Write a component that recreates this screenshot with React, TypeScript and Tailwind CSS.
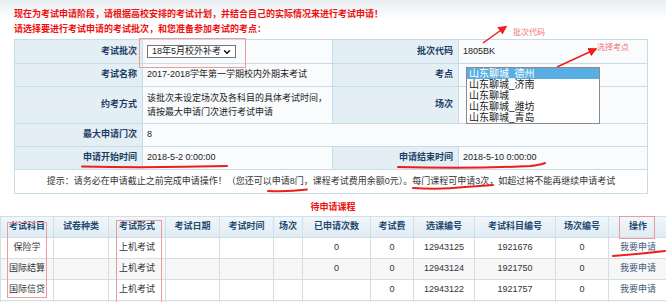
import { Fragment } from "react";
import { ChevronDown } from "lucide-react";

const font = "font-['Liberation_Sans','Noto_Sans_CJK_SC',sans-serif]";

const sites = ["山东聊城_德州", "山东聊城_济南", "山东聊城", "山东聊城_潍坊", "山东聊城_青岛"];

const headers = [
  "考试科目",
  "试卷种类",
  "考试形式",
  "考试日期",
  "考试时间",
  "场次",
  "已申请次数",
  "考试费",
  "选课编号",
  "考试科目编号",
  "场次编号",
  "操作",
];

const courses = [
  ["保险学", "", "上机考试", "", "", "", "0", "0", "12943125", "1921676", "0"],
  ["国际结算", "", "上机考试", "", "", "", "0", "0", "12943124", "1921750", "0"],
  ["国际信贷", "", "上机考试", "", "", "", "", "0", "12943122", "1921757", "0"],
  ["", "", "", "", "", "", "", "", "", "", ""],
];

function Label({ children }: { children: React.ReactNode }) {
  return (
    <div className="flex items-center justify-end bg-[#e4eef5] pr-[5px] font-bold text-[#1c3d63]">
      {children}
    </div>
  );
}

function Value({ children, className = "" }: { children?: React.ReactNode; className?: string }) {
  return (
    <div className={`flex items-center bg-[#f9fbfc] pl-[4px] text-[#222] ${className}`}>
      {children}
    </div>
  );
}

function Annotations() {
  return (
    <>
      <svg
        className="pointer-events-none absolute left-0 top-0"
        width={666}
        height={302}
        viewBox="0 0 666 302"
      >
        <defs>
          <marker id="head" markerWidth="6" markerHeight="6" refX="5" refY="3" orient="auto">
            <path d="M0 0 L6 3 L0 6 z" fill="#f01d1d" />
          </marker>
        </defs>
        {/* boxes */}
        <g fill="none" stroke="#ef9a9a" strokeWidth="1">
          <rect x="139.5" y="38.5" width="106" height="29" />
          <rect x="7.5" y="222.5" width="39" height="75" />
          <rect x="116.5" y="220.5" width="45" height="90" />
          <rect x="619.5" y="216.5" width="35" height="22" />
        </g>
        {/* underlines */}
        <g fill="none" stroke="#f01d1d" strokeWidth="2" strokeLinecap="round">
          <path d="M82 166.5 Q150 168 227 166" />
          <path d="M398 167 Q470 169 530 166 Q540 165 545 163" />
          <path d="M268 191 Q288 192 307 189.5" />
          <path d="M413 188 Q440 190 465 187 Q480 186 493 185" />
          <path d="M613 256 Q640 254 665 251" />
        </g>
        {/* arrows */}
        <g stroke="#f01d1d" strokeWidth="1.5" fill="none">
          <line x1="483" y1="43" x2="506" y2="26.5" markerEnd="url(#head)" />
          <line x1="557" y1="67" x2="596" y2="49" markerEnd="url(#head)" />
        </g>
      </svg>
      <span className="absolute left-[513px] top-[27px] text-[8px] leading-[12px] text-[#f07878]">
        批次代码
      </span>
      <span className="absolute left-[597px] top-[42px] text-[8px] leading-[12px] text-[#f07878]">
        选择考点
      </span>
    </>
  );
}

export default function App() {
  return (
    <div
      className={`relative h-[302px] w-[666px] overflow-hidden bg-[linear-gradient(to_bottom,#e8eef1_0px,#ffffff_20px)] text-[9px] ${font}`}
    >
      {/* notice */}
      <div className="pl-[14px] pt-[7px] text-[9px] font-bold leading-[15px] text-[#f01010]">
        <div>现在为考试申请阶段，请根据高校安排的考试计划，并结合自己的实际情况来进行考试申请！</div>
        <div>请选择要进行考试申请的考试批次，和您准备参加考试的考点：</div>
      </div>

      {/* batch form */}
      <div className="ml-[14px] mt-[2px] grid w-[634px] grid-cols-[127px_189px_125px_188px] grid-rows-[23px_22px_36px_22px_22px_23px] gap-px bg-[#c8dce8] p-px">
        <Label>考试批次</Label>
        <Value>
          <div className="flex h-[13px] w-[89px] items-center justify-between whitespace-nowrap border border-[#767676] bg-white pl-[4px] pr-[3px] text-[9px] leading-[11px] text-[#222]">
            <span>18年5月校外补考</span>
            <ChevronDown size={10} strokeWidth={3.5} className="shrink-0 text-[#111]" />
          </div>
        </Value>
        <Label>批次代码</Label>
        <Value>1805BK</Value>

        <Label>考试名称</Label>
        <Value>2017-2018学年第一学期校内外期末考试</Value>
        <Label>考点</Label>
        <Value className="relative">
          <div className="absolute left-[7px] top-[3px] z-10 w-[134px] border border-[#8a8a8a] bg-white text-[10px] leading-[11px] text-[#222]">
            {sites.map((s, i) => (
              <div key={s} className={`pl-[2px] ${i === 0 ? "bg-[#58aee2] text-white" : ""}`}>
                {s}
              </div>
            ))}
          </div>
        </Value>

        <Label>约考方式</Label>
        <Value className="leading-[14px]">
          <div>
            <div>该批次未设定场次及各科目的具体考试时间，</div>
            <div>请按最大申请门次进行考试申请</div>
          </div>
        </Value>
        <Label>场次</Label>
        <Value />

        <Label>最大申请门次</Label>
        <Value className="col-span-3">8</Value>

        <Label>申请开始时间</Label>
        <Value>2018-5-2 0:00:00</Value>
        <Label>申请结束时间</Label>
        <Value>2018-5-10 0:00:00</Value>

        <div className="col-span-4 flex items-center justify-center bg-white text-[#333]">
          提示：请务必在申请截止之前完成申请操作！（您还可以申请8门，课程考试费用余额0元）。每门课程可申请3次，如超过将不能再继续申请考试
        </div>
      </div>

      {/* pending courses */}
      <div className="mt-[7px] text-center font-bold leading-[12px] text-[#f01010]">待申请课程</div>

      <div className="mt-[3px] grid w-[680px] grid-cols-[52px_54px_56px_53px_53px_28px_67px_42px_60px_80px_52px_58px_60px] gap-px bg-[#d5dee5] pl-px pt-px">
        {headers.map((h) => (
          <div
            key={h}
            className="flex h-[20px] items-center justify-center bg-[linear-gradient(to_bottom,#f1f7fb,#dfebf3)] font-bold text-[#1f4a70]"
          >
            {h}
          </div>
        ))}
        <div className="bg-[linear-gradient(to_bottom,#f1f7fb,#dfebf3)]" />
        {courses.map((row, r) => {
          const bg = r % 2 === 1 ? "bg-[#f7f7f7]" : "bg-white";
          return (
            <Fragment key={r}>
              {row.map((c, i) => (
                <div key={i} className={`flex h-[20px] items-center justify-center text-[#333] ${bg}`}>
                  {c}
                </div>
              ))}
              <div className={`flex h-[20px] items-center justify-center text-[#3c5a78] ${bg}`}>
                {r < 3 ? "我要申请" : ""}
              </div>
              <div className={bg} />
            </Fragment>
          );
        })}
      </div>

      <Annotations />
    </div>
  );
}
